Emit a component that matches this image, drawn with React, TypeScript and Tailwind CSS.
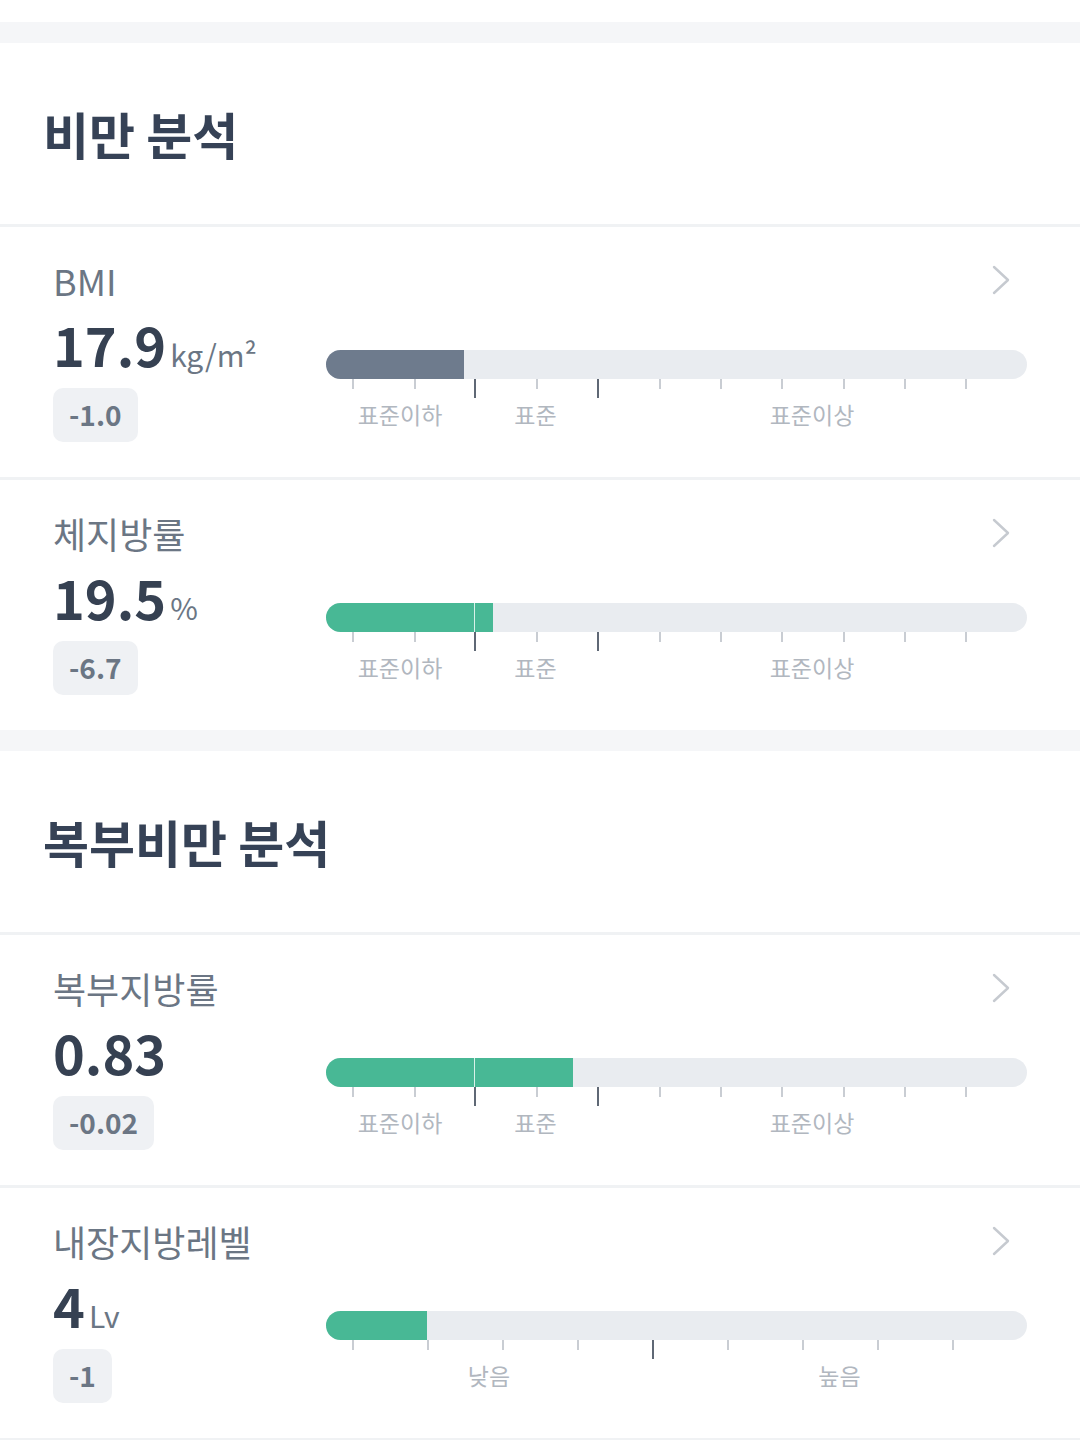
import React from "react";

type Gauge = {
  fill: number;
  color: string;
  ticks: number[];
  major: number[];
  segments: { label: string; width: number }[];
};

type Item = {
  label: string;
  value: string;
  unit?: string;
  diff: string;
  gauge: Gauge;
};

const FONT = { fontFamily: '"Noto Sans CJK KR", "Noto Sans", sans-serif' };

const standardTicks = [26, 88, 148, 210, 271, 333, 394, 455, 517, 578, 639];
const standardSegments = [
  { label: "표준이하", width: 148 },
  { label: "표준", width: 123 },
  { label: "표준이상", width: 430 },
];

const levelTicks = [26, 101, 176, 251, 326, 401, 476, 551, 626];

const obesity: Item[] = [
  {
    label: "BMI",
    value: "17.9",
    unit: "kg/m²",
    diff: "-1.0",
    gauge: { fill: 138, color: "#6e7b8d", ticks: standardTicks, major: [148, 271], segments: standardSegments },
  },
  {
    label: "체지방률",
    value: "19.5",
    unit: "%",
    diff: "-6.7",
    gauge: { fill: 167, color: "#48b895", ticks: standardTicks, major: [148, 271], segments: standardSegments },
  },
];

const abdominal: Item[] = [
  {
    label: "복부지방률",
    value: "0.83",
    diff: "-0.02",
    gauge: { fill: 247, color: "#48b895", ticks: standardTicks, major: [148, 271], segments: standardSegments },
  },
  {
    label: "내장지방레벨",
    value: "4",
    unit: "Lv",
    diff: "-1",
    gauge: {
      fill: 101,
      color: "#48b895",
      ticks: levelTicks,
      major: [326],
      segments: [
        { label: "낮음", width: 326 },
        { label: "높음", width: 375 },
      ],
    },
  },
];

const Chevron = () => (
  <svg width="18" height="30" viewBox="0 0 18 30" fill="none">
    <polyline points="2,2 16,15 2,28" stroke="#c6cad0" strokeWidth="2.4" strokeLinecap="round" strokeLinejoin="round" />
  </svg>
);

const GaugeBar = ({ gauge }: { gauge: Gauge }) => (
  <div className="w-[701px]">
    <div className="relative h-[29px] w-full overflow-hidden rounded-full bg-[#e9ecf0]">
      <div className="h-full" style={{ width: gauge.fill, backgroundColor: gauge.color }} />
      {gauge.major
        .filter((m) => m < gauge.fill)
        .map((m) => (
          <div key={m} className="absolute top-0 h-full w-[1px] bg-[#d9f1e9]" style={{ left: m }} />
        ))}
    </div>
    <div className="relative h-[19px]">
      {gauge.ticks.map((t) => {
        const isMajor = gauge.major.includes(t);
        return (
          <div
            key={t}
            className={isMajor ? "absolute top-0 h-[19px] w-[2px] bg-[#5f6875]" : "absolute top-0 h-[10px] w-[1.5px] bg-[#c9cdd3]"}
            style={{ left: t }}
          />
        );
      })}
    </div>
    <div className="mt-[4px] flex">
      {gauge.segments.map((s) => (
        <div key={s.label} className="text-center text-[23px] leading-[24px] text-[#b1b7bf]" style={{ width: s.width }}>
          {s.label}
        </div>
      ))}
    </div>
  </div>
);

const Row = ({ item }: { item: Item }) => (
  <div className="flex h-[250px] px-[53px]">
    <div className="flex w-[273px] flex-col items-start">
      <div className="pt-[33px] text-[36px] leading-[40px] text-[#6b7684]">{item.label}</div>
      <div className="mt-[16px] flex h-[60px] items-baseline">
        <span className="text-[54px] font-bold leading-[56px] text-[#364152]">{item.value}</span>
        {item.unit && <span className="ml-[4px] text-[30px] text-[#6b7684]">{item.unit}</span>}
      </div>
      <div className="mt-[12px] flex h-[54px] items-center rounded-[10px] bg-[#eff1f4] px-[16px] pb-[3px] text-[28px] font-bold text-[#6b7684]">
        {item.diff}
      </div>
    </div>
    <div className="flex flex-1 flex-col">
      <div className="mr-[17px] mt-[38px] h-[30px] self-end">
        <Chevron />
      </div>
      <div className="mt-[55px]">
        <GaugeBar gauge={item.gauge} />
      </div>
    </div>
  </div>
);

const Divider = () => <div className="h-[3px] bg-[#f0f2f4]" />;

const Section = ({ title, items }: { title: string; items: Item[] }) => (
  <section>
    <div className="flex h-[181px] items-center pl-[43px]">
      <h2 className="text-[50px] font-bold text-[#364256]">{title}</h2>
    </div>
    {items.map((item) => (
      <React.Fragment key={item.label}>
        <Divider />
        <Row item={item} />
      </React.Fragment>
    ))}
  </section>
);

export default function App() {
  return (
    <div className="min-h-[1440px] w-[1080px] bg-white" style={FONT}>
      <div className="h-[22px]" />
      <div className="h-[21px] bg-[#f5f6f8]" />
      <Section title="비만 분석" items={obesity} />
      <div className="h-[21px] bg-[#f5f6f8]" />
      <Section title="복부비만 분석" items={abdominal} />
      <Divider />
    </div>
  );
}
